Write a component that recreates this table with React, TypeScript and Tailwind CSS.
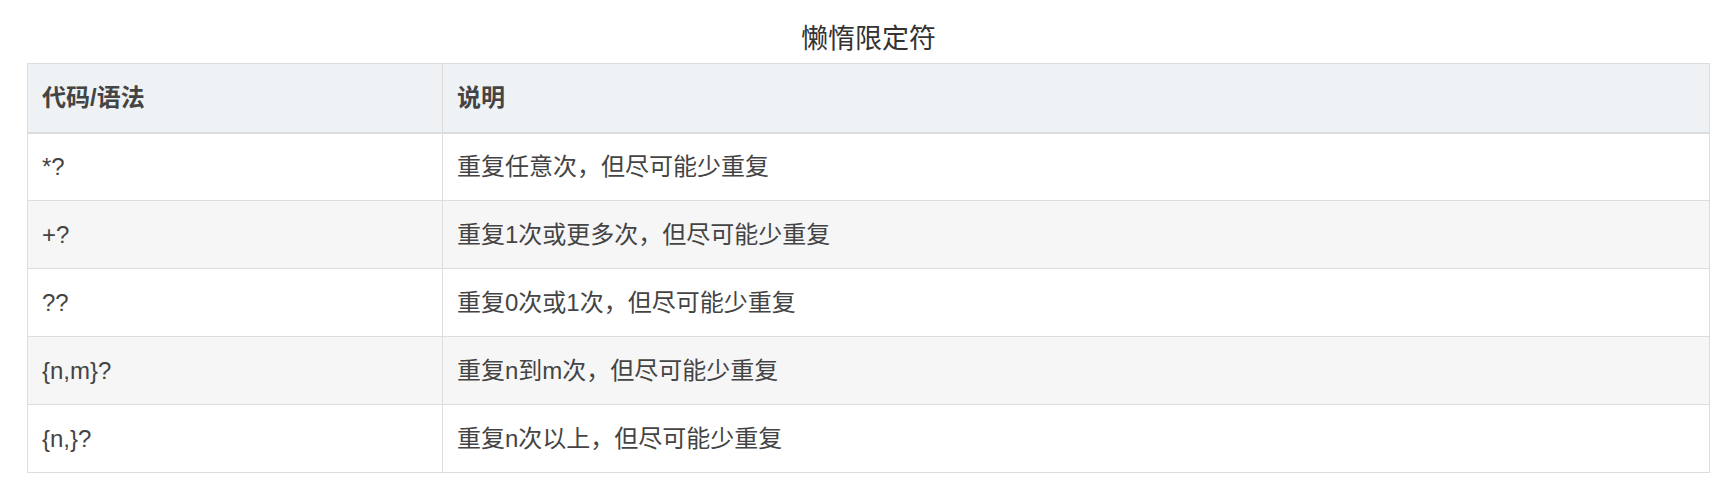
const rows: [string, string][] = [
  ['*?', '重复任意次，但尽可能少重复'],
  ['+?', '重复1次或更多次，但尽可能少重复'],
  ['??', '重复0次或1次，但尽可能少重复'],
  ['{n,m}?', '重复n到m次，但尽可能少重复'],
  ['{n,}?', '重复n次以上，但尽可能少重复'],
]

export default function App() {
  return (
    <div
      className="min-h-[500px] w-[1725px] bg-white pl-[27px] text-[#444]"
      style={{ fontFamily: '"Liberation Sans", "Noto Sans CJK SC", sans-serif' }}
    >
      <div className="w-[1683px]">
        <div className="h-[63px] pt-[23px] text-center text-[27px] leading-[32px] text-[#333]">懒惰限定符</div>
        <table className="w-full table-fixed border-collapse border border-[#dddddd] text-left text-[24px]">
          <thead>
            <tr className="h-[69px] border-b-2 border-[#dddddd] bg-[#eff2f5]">
              <th className="w-[415px] border-r border-[#dddddd] px-[14px] font-bold">代码/语法</th>
              <th className="px-[14px] font-bold">说明</th>
            </tr>
          </thead>
          <tbody>
            {rows.map(([code, desc], i) => (
              <tr key={code} className={`h-[68px] border-b border-[#dddddd] ${i % 2 === 1 ? 'bg-[#f6f6f6]' : 'bg-white'}`}>
                <td className="border-r border-[#dddddd] px-[14px]">{code}</td>
                <td className="px-[14px]">{desc}</td>
              </tr>
            ))}
          </tbody>
        </table>
      </div>
    </div>
  )
}
